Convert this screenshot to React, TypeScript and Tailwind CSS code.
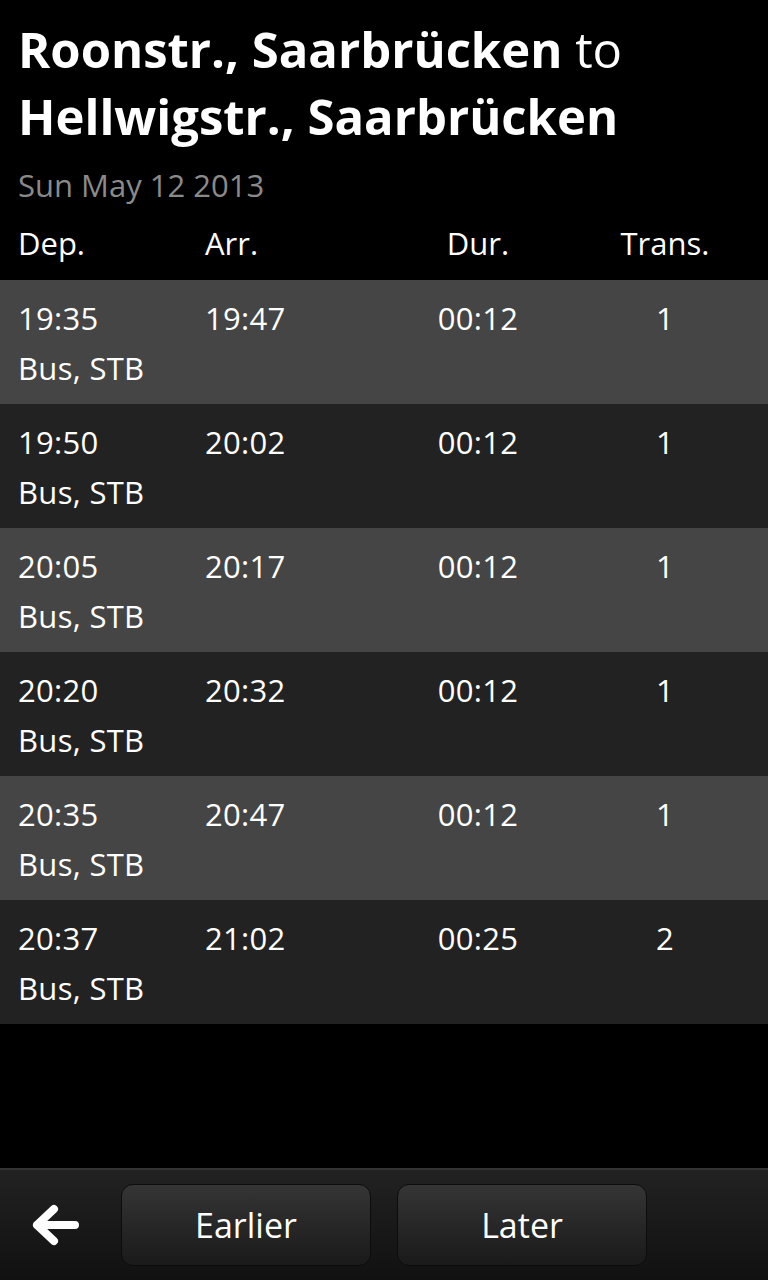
import React from "react";

const trips = [
  { dep: "19:35", arr: "19:47", dur: "00:12", trans: "1" },
  { dep: "19:50", arr: "20:02", dur: "00:12", trans: "1" },
  { dep: "20:05", arr: "20:17", dur: "00:12", trans: "1" },
  { dep: "20:20", arr: "20:32", dur: "00:12", trans: "1" },
  { dep: "20:35", arr: "20:47", dur: "00:12", trans: "1" },
  { dep: "20:37", arr: "21:02", dur: "00:25", trans: "2" },
];

const cols = "grid grid-cols-[187px_180px_186px_188px] pl-[18px]";

const BackArrow = () => (
  <svg width="48" height="42" viewBox="0 0 48 42" fill="none">
    <path
      d="M22 5 L5 21 L22 37 M5 21 H43"
      stroke="white"
      strokeWidth="8"
      strokeLinecap="round"
      strokeLinejoin="round"
    />
  </svg>
);

export default function App() {
  return (
    <div className="w-[768px] h-[1280px] bg-black text-white flex flex-col font-['Open_Sans',sans-serif]">
      {/* Header */}
      <div className="px-[18px] pt-[16px]">
        <h1 className="text-[49px] leading-[67px] whitespace-nowrap">
          <span className="font-bold">Roonstr., Saarbrücken</span> to
          <br />
          <span className="font-bold">Hellwigstr., Saarbrücken</span>
        </h1>
        <div className="text-[31px] leading-[40px] mt-[15px] text-[#8a8a8a]">
          Sun May 12 2013
        </div>
      </div>

      <div className={`${cols} text-[31px] leading-[40px] mt-[18px] h-[57px]`}>
        <div>Dep.</div>
        <div>Arr.</div>
        <div className="text-center">Dur.</div>
        <div className="text-center">Trans.</div>
      </div>

      {/* Results */}
      <div className="flex flex-col">
        {trips.map((t, i) => (
          <div
            key={i}
            className={`${cols} h-[124px] pt-[13px] text-[31px] leading-[50px] tracking-[0.3px] ${
              i % 2 === 0 ? "bg-[#454545]" : "bg-[#222222]"
            }`}
          >
            <div>
              <div>{t.dep}</div>
              <div>Bus, STB</div>
            </div>
            <div>{t.arr}</div>
            <div className="text-center">{t.dur}</div>
            <div className="text-center">{t.trans}</div>
          </div>
        ))}
      </div>

      <div className="flex-1" />

      {/* Toolbar */}
      <div className="h-[112px] border-t-2 border-[#333] bg-gradient-to-b from-[#222] to-[#111] flex items-center">
        <div className="w-[121px] flex pl-[32px]">
          <BackArrow />
        </div>
        <button className="w-[250px] h-[82px] rounded-[12px] border border-[#0c0c0c] bg-gradient-to-b from-[#353535] to-[#1a1a1a] text-[34px] text-white">
          Earlier
        </button>
        <button className="ml-[26px] w-[250px] h-[82px] rounded-[12px] border border-[#0c0c0c] bg-gradient-to-b from-[#353535] to-[#1a1a1a] text-[34px] text-white">
          Later
        </button>
      </div>
    </div>
  );
}
